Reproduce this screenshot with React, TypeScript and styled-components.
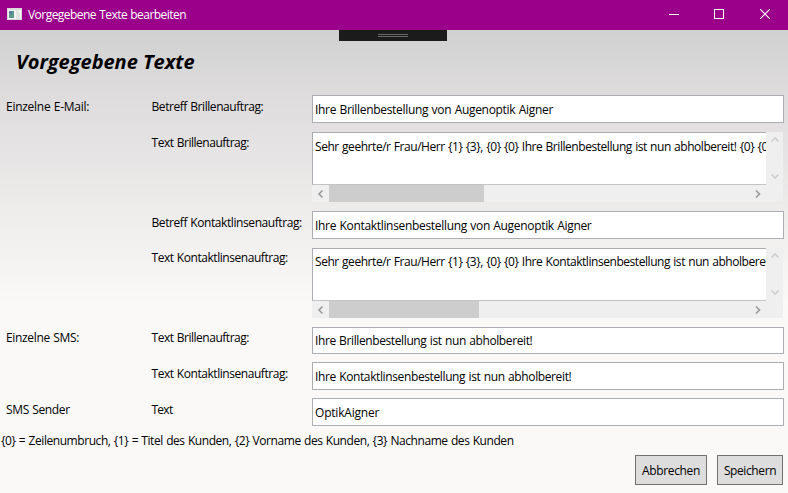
import React from "react";
import styled, { createGlobalStyle } from "styled-components";

const Global = createGlobalStyle`
  html, body { margin: 0; overflow: hidden; }
  * { box-sizing: border-box; }
`;

const Window = styled.div`
  width: 788px;
  height: 493px;
  display: flex;
  flex-direction: column;
  overflow: hidden;
  font: 12px/17px "Open Sans", "Noto Sans", sans-serif;
  word-spacing: 0.6px;
  color: #000;
`;

const TitleBar = styled.header`
  height: 30px;
  flex: none;
  display: flex;
  align-items: center;
  padding-left: 7px;
  background: #9b008b;
  color: #fff;
`;

const Caption = styled.div`
  padding-bottom: 1px;
`;

const AppIcon = styled.svg`
  display: block;
  margin-right: 6px;
  margin-bottom: 2px;
`;

const Line = styled.span<{ $ls?: number }>`
  display: block;
  white-space: pre;
  letter-spacing: ${(p) => p.$ls ?? 0}px;
`;

const WindowButtons = styled.div`
  margin-left: auto;
  display: flex;
`;

const WindowButton = styled.button`
  width: 46px;
  height: 30px;
  border: 0;
  padding: 0 0 2px;
  background: none;
  display: grid;
  place-items: center;
  &:first-child { width: 45px; }
`;

const Content = styled.main`
  position: relative;
  flex: 1;
  background: linear-gradient(#d1d1d1 0, #dddbdb 60px, #faf9f8 275px);
`;

const DebugTab = styled.div`
  position: absolute;
  left: 339px;
  top: 0;
  width: 108px;
  height: 11px;
  padding: 4px 39px;
  background: #1b1b1c;
`;

const Grip = styled.div`
  height: 3px;
  border: solid #686868;
  border-width: 1px 0;
`;

const Heading = styled.h1`
  margin: 0;
  height: 65px;
  padding: 18px 0 0 16px;
  font-size: 20px;
  line-height: 27px;
  font-style: italic;
  font-weight: 700;
  word-spacing: 0;
`;

const Row = styled.div<{ $h: number; $gap: number }>`
  display: grid;
  grid-template-columns: 145.5px 160.5px 472px;
  padding-left: 6px;
  height: ${(p) => p.$h}px;
  margin-bottom: ${(p) => p.$gap}px;
`;

const Label = styled.div<{ $top: number }>`
  padding-top: ${(p) => p.$top}px;
`;

const Field = styled.div<{ $pad: number }>`
  height: 100%;
  border: 1px solid #abadb3;
  background: #fff;
  padding: ${(p) => p.$pad}px 0 0 2px;
  overflow: hidden;
`;

const Area = styled.div`
  width: 471px;
  height: 70px;
  display: grid;
  grid-template-columns: 454px 17px;
  grid-template-rows: 53px 17px;
  background: #efefef;
`;

const AreaText = styled(Field)`
  border-right-width: 0;
  border-bottom-color: #c3c4c8;
`;

const VScroll = styled.div`
  display: flex;
  flex-direction: column;
  align-items: center;
  justify-content: space-between;
  padding: 3px 0 3px;
`;

const HScroll = styled.div`
  display: flex;
  align-items: center;
`;

const ScrollButton = styled.div`
  width: 17px;
  display: grid;
  place-items: center;
`;

const Track = styled.div`
  flex: 1;
  height: 17px;
`;

const Thumb = styled.div<{ $w: number }>`
  width: ${(p) => p.$w}px;
  height: 17px;
  background: #cdcdcd;
`;

const Hint = styled.div`
  padding: 6px 0 0 1px;
`;

const Buttons = styled.div`
  display: flex;
  justify-content: flex-end;
  gap: 10px;
  padding: 6px 5px 0 0;
`;

const Button = styled.button<{ $w: number }>`
  width: ${(p) => p.$w}px;
  height: 30px;
  padding: 1px 0 0;
  display: flex;
  align-items: center;
  justify-content: center;
  border: 1px solid #707070;
  background: #ddd;
  font: inherit;
  color: #000;
`;

const paths = {
  left: "M6.5 1.5 3 5l3.5 3.5",
  right: "M3 1.5 6.5 5 3 8.5",
  up: "M1.5 6.5 5 3l3.5 3.5",
  down: "M1.5 2.5 5 6l3.5-3.5",
};

function Chevron({ dir, color }: { dir: keyof typeof paths; color: string }) {
  return (
    <svg width="10" height="10" viewBox="0 0 10 10" fill="none" stroke={color} strokeWidth="1.6">
      <path d={paths[dir]} />
    </svg>
  );
}

function ScrollArea({ text, ls, pad, thumb }: { text: string; ls: number; pad: number; thumb: number }) {
  return (
    <Area>
      <AreaText $pad={pad}><Line $ls={ls}>{text}</Line></AreaText>
      <VScroll>
        <Chevron dir="up" color="#cfcfcf" />
        <Chevron dir="down" color="#cfcfcf" />
      </VScroll>
      <HScroll>
        <ScrollButton><Chevron dir="left" color="#999" /></ScrollButton>
        <Track><Thumb $w={thumb} /></Track>
        <ScrollButton><Chevron dir="right" color="#999" /></ScrollButton>
      </HScroll>
    </Area>
  );
}

type RowData = {
  h: number; gap: number; top: number; pad: number;
  group?: [string, number]; label: [string, number]; value: [string, number]; thumb?: number;
};

const rows: RowData[] = [
  { h: 28, gap: 9, top: 3, pad: 5, group: ["Einzelne E-Mail:", -0.27], label: ["Betreff Brillenauftrag:", -0.43], value: ["Ihre Brillenbestellung von Augenoptik Aigner", -0.31] },
  { h: 70, gap: 9, top: 2, pad: 5, label: ["Text Brillenauftrag:", -0.48], value: ["Sehr geehrte/r Frau/Herr {1} {3}, {0} {0} Ihre Brillenbestellung ist nun abholbereit! {0} {0}", -0.45], thumb: 155 },
  { h: 28, gap: 9, top: 3, pad: 5, label: ["Betreff Kontaktlinsenauftrag:", -0.42], value: ["Ihre Kontaktlinsenbestellung von Augenoptik Aigner", -0.32] },
  { h: 70, gap: 9, top: 1, pad: 4, label: ["Text Kontaktlinsenauftrag:", -0.45], value: ["Sehr geehrte/r Frau/Herr {1} {3}, {0} {0} Ihre Kontaktlinsenbestellung ist nun abholbereit!", -0.45], thumb: 150 },
  { h: 27, gap: 8, top: 2, pad: 4, group: ["Einzelne SMS:", -0.34], label: ["Text Brillenauftrag:", -0.48], value: ["Ihre Brillenbestellung ist nun abholbereit!", -0.39] },
  { h: 28, gap: 8, top: 3, pad: 5, label: ["Text Kontaktlinsenauftrag:", -0.45], value: ["Ihre Kontaktlinsenbestellung ist nun abholbereit!", -0.38] },
  { h: 28, gap: 0, top: 3, pad: 5, group: ["SMS Sender", -0.36], label: ["Text", -0.75], value: ["OptikAigner", -0.2] },
];

export default function App() {
  return (
    <Window>
      <Global />
      <TitleBar>
        <AppIcon width="15" height="12" viewBox="0 0 15 12">
          <rect width="15" height="12" fill="#d9d9d9" />
          <rect x="1" y="2" width="13" height="9" fill="#f4f4f4" />
          <rect x="2" y="3" width="5" height="7" fill="#5b9a8b" />
          <rect x="2" y="3" width="3" height="3" fill="#557f9c" />
          <rect x="9" y="2" width="4" height="9" fill="#e4e4e4" />
          <rect x="12" y="2" width="1" height="3" fill="#fff" />
        </AppIcon>
        <Caption><Line $ls={-0.54}>Vorgegebene Texte bearbeiten</Line></Caption>
        <WindowButtons>
          <WindowButton aria-label="Minimieren">
            <svg width="10" height="10"><rect y="5" width="10" height="1" fill="#fff" /></svg>
          </WindowButton>
          <WindowButton aria-label="Maximieren">
            <svg width="10" height="10"><rect x=".5" y=".5" width="9" height="9" fill="none" stroke="#fff" /></svg>
          </WindowButton>
          <WindowButton aria-label="Schließen">
            <svg width="10" height="10"><path d="M0 0 10 10M10 0 0 10" stroke="#fff" strokeWidth="1.1" /></svg>
          </WindowButton>
        </WindowButtons>
      </TitleBar>
      <Content>
        <DebugTab><Grip /></DebugTab>
        <Heading><Line $ls={-0.03}>Vorgegebene Texte</Line></Heading>
        {rows.map((r, i) => (
          <Row key={i} $h={r.h} $gap={r.gap}>
            <Label $top={r.top}>{r.group && <Line $ls={r.group[1]}>{r.group[0]}</Line>}</Label>
            <Label $top={r.top}><Line $ls={r.label[1]}>{r.label[0]}</Line></Label>
            {r.thumb ? (
              <ScrollArea text={r.value[0]} ls={r.value[1]} pad={r.pad} thumb={r.thumb} />
            ) : (
              <Field $pad={r.pad}><Line $ls={r.value[1]}>{r.value[0]}</Line></Field>
            )}
          </Row>
        ))}
        <Hint><Line $ls={-0.435}>{"{0} = Zeilenumbruch, {1} = Titel des Kunden, {2} Vorname des Kunden, {3} Nachname des Kunden"}</Line></Hint>
        <Buttons>
          <Button $w={72}><Line $ls={-0.35}>Abbrechen</Line></Button>
          <Button $w={66}><Line $ls={-0.4}>Speichern</Line></Button>
        </Buttons>
      </Content>
    </Window>
  );
}
